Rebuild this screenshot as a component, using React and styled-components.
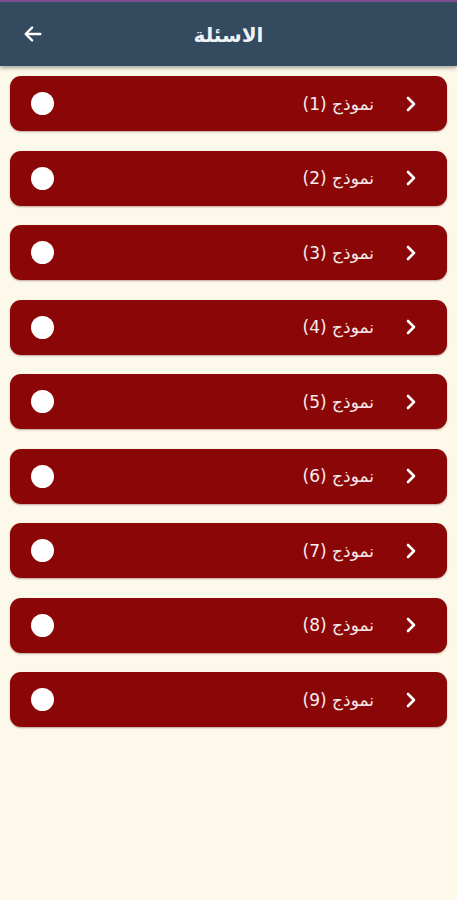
import React from 'react'
import { styled, createGlobalStyle } from 'styled-components'

const GlobalStyle = createGlobalStyle`
  html, body {
    margin: 0;
    padding: 0;
    background: #fdf9ea;
    font-family: "DejaVu Sans", "Noto Sans", sans-serif;
  }
`

const models = [1, 2, 3, 4, 5, 6, 7, 8, 9]

export default function App() {
  return (
    <Page>
      <GlobalStyle />
      <Header>
        <BackBtn aria-label="رجوع">
          <svg width="22" height="22" viewBox="0 0 24 24" fill="none" stroke="#fff" strokeWidth="2.6" strokeLinecap="round" strokeLinejoin="round">
            <path d="M20 12H5" />
            <path d="M11 5l-7 7 7 7" />
          </svg>
        </BackBtn>
        <Title>الاسئلة</Title>
      </Header>
      <List>
        {models.map((n) => (
          <Card key={n}>
            <Chevron>
              <svg width="14" height="16" viewBox="0 0 14 16" fill="none" stroke="#fff" strokeWidth="2.6" strokeLinecap="round" strokeLinejoin="round">
                <path d="M4 2l6 6-6 6" />
              </svg>
            </Chevron>
            <Label>نموذج ({n})</Label>
            <Dot />
          </Card>
        ))}
      </List>
    </Page>
  )
}

const Page = styled.div`
  min-height: 900px;
  background: #fdf9ea;
`

const Header = styled.header`
  height: 64px;
  border-top: 2px solid #7b4d8c;
  background-color: #344a5f;
  display: flex;
  align-items: center;
  justify-content: center;
  position: relative;
  box-shadow: 0 2px 4px rgba(0, 0, 0, 0.35);
`

const BackBtn = styled.button`
  position: absolute;
  left: 22px;
  top: 21px;
  background: none;
  border: none;
  padding: 0;
  display: flex;
  cursor: pointer;
`

const Title = styled.h1`
  margin: 2px 0 0;
  color: #eef3f8;
  font-size: 20px;
  font-weight: bold;
  direction: rtl;
`

const List = styled.div`
  display: flex;
  flex-direction: column;
  gap: 19.5px;
  padding: 10px 10px 0;
`

const Card = styled.div`
  direction: rtl;
  height: 55px;
  background-color: #8b0707;
  border-radius: 11px;
  display: flex;
  align-items: center;
  padding: 0 29px 0 21px;
  box-shadow: 0 1px 2px rgba(80, 0, 0, 0.35);
`

const Chevron = styled.span`
  display: flex;
  margin-left: 30px;
`

const Label = styled.span`
  color: #f6ecec;
  font-size: 17px;
`

const Dot = styled.span`
  margin-right: auto;
  width: 23px;
  height: 23px;
  border-radius: 50%;
  background: #ffffff;
`
